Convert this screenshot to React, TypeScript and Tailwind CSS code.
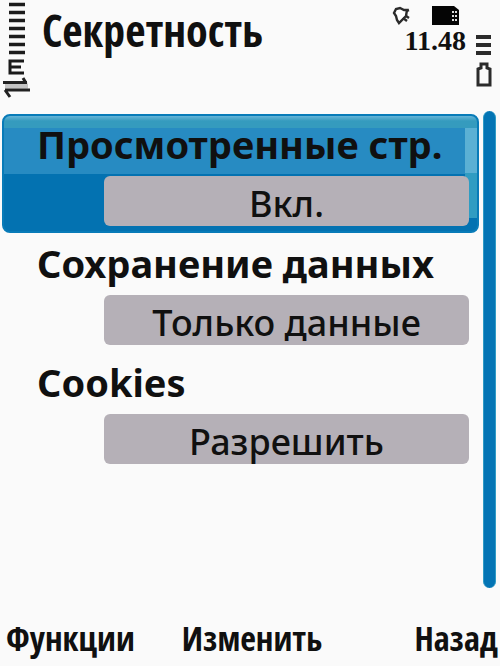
const settings = [
  { id: "pages", label: "Просмотренные стр.", value: "Вкл." },
  { id: "data", label: "Сохранение данных", value: "Только данные" },
  { id: "cookies", label: "Cookies", value: "Разрешить" },
];

function SignalIcon() {
  return (
    <svg className="mt-0.5 h-24 w-8 shrink-0" viewBox="0 0 32 96" fill="none" role="img" aria-label="Сигнал сети">
      <path d="M9 2.5h16M9 10.5h16M9 18.5h16M9 26.5h16M9 34.5h16M9 42.5h16M9 50.5h16" stroke="#1c1c1c" strokeWidth="3.6" />
      <path d="M24 59H10v12h14M10 65h11" stroke="#1a1a1a" strokeWidth="3" />
      <path d="M5 84h23" stroke="#c4c4c4" strokeWidth="5" />
      <path d="M3 80.5h24M23 76l3 5" stroke="#222" strokeWidth="3" />
      <path d="M30 88H5M5 88l5 7" stroke="#222" strokeWidth="3" />
    </svg>
  );
}

function AlarmIcon() {
  return (
    <svg className="h-5 w-5" viewBox="0 0 20 20" fill="none" stroke="#2b2b2b" strokeWidth="2.4" role="img" aria-label="Будильник">
      <path d="M2 7l2-4 4-1 4 2h3l-1 6-7 7-2-3-1-4z" fill="#fff" />
      <path d="M14 5l3-1M11 12l4 3M14 10l3 2" />
    </svg>
  );
}

function CardIcon() {
  return (
    <svg className="h-5 w-7" viewBox="0 0 28 20" role="img" aria-label="Карта памяти">
      <path d="M0 0h22l5 4v15H0z" fill="#050505" />
      <path d="M20 6h5M20 10h5M20 14h5" stroke="#ddd" strokeWidth="2" strokeDasharray="2 1" />
    </svg>
  );
}

function BatteryIcon() {
  return (
    <svg className="h-14 w-5 shrink-0" viewBox="0 0 20 56" fill="none" role="img" aria-label="Заряд батареи">
      <path d="M2 5h15M2 13h15M2 21h15" stroke="#2b2b2b" strokeWidth="4" />
      <path d="M4 37l3-1v-4h6v4l3 1v16H4z" stroke="#2b2b2b" strokeWidth="3" />
    </svg>
  );
}

export default function App() {
  return (
    <div className="flex min-h-screen flex-col overflow-hidden bg-[#fafafa] font-['Noto_Sans','Open_Sans',sans-serif] text-[#101010]">
      <header className="flex h-28 items-start">
        <SignalIcon />
        <h1 className="ml-2.5 flex-1 whitespace-nowrap font-['Open_Sans_Condensed','Open_Sans',sans-serif] text-[44px] leading-[60px] font-bold">
          Секретность
        </h1>
        <div className="flex flex-col items-end pt-1.5">
          <div className="flex gap-5 pr-1.5">
            <AlarmIcon />
            <CardIcon />
          </div>
          <time className="font-['Liberation_Serif',serif] text-[28px] leading-[30px] font-bold">11.48</time>
        </div>
        <div className="ml-2 mr-1.5 mt-8">
          <BatteryIcon />
        </div>
      </header>

      <main className="flex gap-1 pr-1 pl-0.5">
        <ul className="flex flex-1 flex-col pt-0.5">
          {settings.map((item, index) => (
            <li
              key={item.id}
              className={
                index === 0
                  ? "relative h-[119px] overflow-hidden rounded-lg border-2 border-[#087bb8] bg-[linear-gradient(#65b4d8_0px,#359bbe_5px,#359bbe_12px,#278bc2_12px,#278bc2_58px,#0372b1_58px)] pr-2 pl-[100px]"
                  : "h-[119px] border-2 border-transparent pr-2 pl-[100px]"
              }
            >
              {index === 0 && (
                <span className="absolute top-3 right-0 h-[90px] w-3 bg-linear-to-b from-[#5bb0d4] from-50% to-[#309cc2] to-50%" />
              )}
              <label
                htmlFor={item.id}
                className="relative -ml-[67px] block h-[60px] text-[38px] leading-[56px] font-bold whitespace-nowrap"
              >
                {item.label}
              </label>
              <button
                id={item.id}
                type="button"
                className="relative block h-[50px] w-full rounded-md bg-[#b5b0b7] text-center text-[36px] leading-[56px] font-medium whitespace-nowrap"
              >
                {item.value}
              </button>
            </li>
          ))}
        </ul>
        <div
          role="scrollbar"
          aria-controls="pages"
          aria-valuenow={0}
          className="-mt-px h-[477px] w-[13px] rounded-full border-x border-[#2f9bc5] bg-[#0374b4]"
        />
      </main>

      <footer className="mt-auto grid grid-cols-[1fr_auto_1fr] items-center pr-0.5 pb-1 pl-1.5 font-['Open_Sans_Condensed','Open_Sans',sans-serif] text-[34px] leading-[48px] font-bold">
        <button type="button" className="text-left">Функции</button>
        <button type="button">Изменить</button>
        <button type="button" className="text-right">Назад</button>
      </footer>
    </div>
  );
}
